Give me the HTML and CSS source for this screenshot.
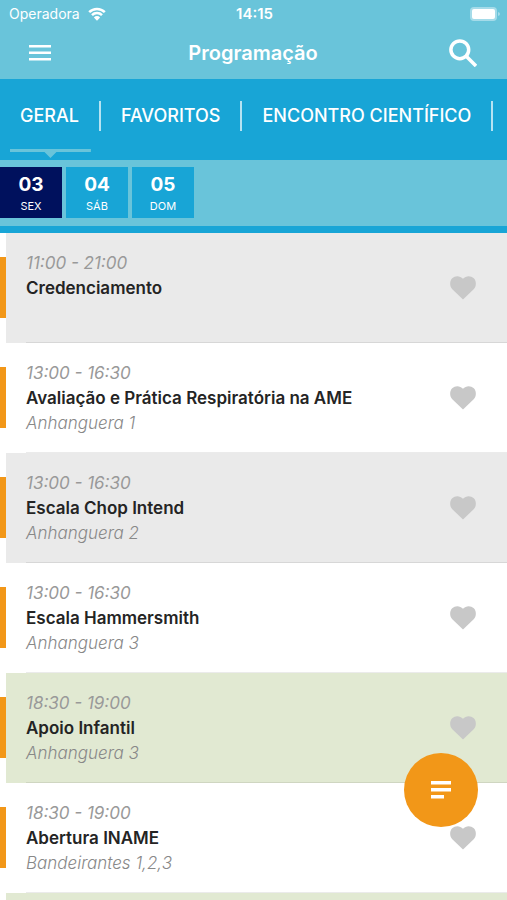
FILE: index.html
```html
<!DOCTYPE html>
<html lang="pt-BR">
<head>
  <meta charset="UTF-8" />
  <title>Programação</title>
  <meta name="viewport" content="width=device-width, initial-scale=1.0" />
  <link rel="stylesheet" href="styles.css">
</head>
<body>
  <svg class="sprite" aria-hidden="true">
    <symbol id="heart" viewBox="0 0 26 24">
      <path d="M13 23.5 2.3 13.2C-.6 10.2-.5 5 2.2 2.3 5.200-.6 10-.5 13 2.800 16-.5 20.800-.6 23.800 2.300c2.700 2.700 2.800 7.900-.1 10.900z" />
    </symbol>
  </svg>

  <header>
    <div class="status-bar">
      <span class="carrier">Operadora
        <svg class="wifi" viewBox="0 0 18 14">
          <path d="M1.200 5.200a11 11 0 0 1 15.600 0M4 8.200a7 7 0 0 1 10 0" />
          <path class="dot" d="M5.900 10.400a4.400 4.400 0 0 1 6.200 0L9 13.700z" />
        </svg>
      </span>
      <span class="clock">14:15</span>
      <svg class="battery" viewBox="0 0 30 14">
        <rect class="case" width="27" height="14" rx="4" />
        <rect x="2" y="2" width="23" height="10" rx="2" />
        <path class="tip" d="M28 5v4q2-.5 2-2t-2-2z" />
      </svg>
    </div>
    <div class="nav-bar">
      <button aria-label="Menu">
        <svg width="22" height="16" viewBox="0 0 22 16"><path d="M0 0h22v2.500H0zM0 6.500h22V9H0zM0 13h22v2.500H0z" /></svg>
      </button>
      <h1>Programação</h1>
      <button aria-label="Buscar">
        <svg class="search" width="28" height="28" viewBox="0 0 28 28">
          <circle cx="10.800" cy="10.800" r="8.900" />
          <path d="m17 17 10 10" />
        </svg>
      </button>
    </div>
  </header>

  <nav class="tabs">
    <a href="#geral" class="active">GERAL</a>
    <a href="#favoritos">FAVORITOS</a>
    <a href="#encontro">ENCONTRO CIENTÍFICO</a>
  </nav>

  <div class="days">
    <button class="active"><b>03</b>SEX</button>
    <button><b>04</b>SÁB</button>
    <button><b>05</b>DOM</button>
  </div>

  <main>
    <article class="gray">
      <div class="info">
        <time>11:00 - 21:00</time>
        <h2>Credenciamento</h2>
      </div>
      <button class="fav" aria-label="Favoritar"><svg><use href="#heart" /></svg></button>
    </article>
    <article>
      <div class="info">
        <time>13:00 - 16:30</time>
        <h2>Avaliação e Prática Respiratória na AME</h2>
        <p>Anhanguera 1</p>
      </div>
      <button class="fav" aria-label="Favoritar"><svg><use href="#heart" /></svg></button>
    </article>
    <article class="gray">
      <div class="info">
        <time>13:00 - 16:30</time>
        <h2>Escala Chop Intend</h2>
        <p>Anhanguera 2</p>
      </div>
      <button class="fav" aria-label="Favoritar"><svg><use href="#heart" /></svg></button>
    </article>
    <article>
      <div class="info">
        <time>13:00 - 16:30</time>
        <h2>Escala Hammersmith</h2>
        <p>Anhanguera 3</p>
      </div>
      <button class="fav" aria-label="Favoritar"><svg><use href="#heart" /></svg></button>
    </article>
    <article class="green">
      <div class="info">
        <time>18:30 - 19:00</time>
        <h2>Apoio Infantil</h2>
        <p>Anhanguera 3</p>
      </div>
      <button class="fav" aria-label="Favoritar"><svg><use href="#heart" /></svg></button>
    </article>
    <article>
      <div class="info">
        <time>18:30 - 19:00</time>
        <h2>Abertura INAME</h2>
        <p>Bandeirantes 1,2,3</p>
      </div>
      <button class="fav" aria-label="Favoritar"><svg><use href="#heart" /></svg></button>
    </article>
    <article class="green"></article>
  </main>

  <button class="fab" aria-label="Filtrar">
    <svg width="20" height="18" viewBox="0 0 20 18"><path d="M0 0h20v3.500H0zM0 7h20v3.500H0zM0 14h13v3.500H0z" /></svg>
  </button>
</body>
</html>
```
FILE: styles.css
```css
:root {
  --light-blue: #69c4da;
  --blue: #18a5d6;
  --navy: #00115d;
  --orange: #f29718;
}
* {
  box-sizing: border-box;
}
body {
  margin: 0;
  height: 100vh;
  display: flex;
  flex-direction: column;
  overflow: hidden;
  font-family: Inter, "Liberation Sans", sans-serif;
  background: #fff;
}
button {
  border: none;
  padding: 0;
  background: none;
  font-family: inherit;
  color: #fff;
  cursor: pointer;
}
svg {
  display: block;
  fill: currentColor;
}
h1, h2, p {
  margin: 0;
}
.sprite {
  position: absolute;
  width: 0;
  height: 0;
}
header {
  flex: none;
  background: var(--light-blue);
  color: #fff;
}
.status-bar {
  display: grid;
  grid-template-columns: 1fr auto 1fr;
  align-items: center;
  height: 27px;
  padding: 0 7px 0 9px;
  font-size: 15px;
}
.carrier {
  display: flex;
  align-items: center;
  gap: 8px;
  font-size: 14px;
}
.wifi {
  width: 18px;
  height: 14px;
  fill: none;
  stroke: #fff;
  stroke-width: 2.5;
}
.wifi .dot {
  fill: #fff;
  stroke: none;
}
.clock {
  font-weight: 600;
}
.battery {
  width: 30px;
  height: 14px;
  justify-self: end;
}
.battery .case,
.battery .tip {
  opacity: 0.4;
}
.nav-bar {
  display: grid;
  grid-template-columns: 1fr auto 1fr;
  align-items: center;
  height: 52px;
  padding: 0 30px 0 29px;
}
.nav-bar h1 {
  font-size: 20px;
  font-weight: 600;
}
.nav-bar button:last-child {
  justify-self: end;
}
.nav-bar button:first-child {
  justify-self: start;
}
.search {
  fill: none;
  stroke: #fff;
  stroke-width: 3.5;
}
.tabs {
  flex: none;
  display: flex;
  align-items: flex-start;
  height: 81px;
  background: var(--blue);
  overflow: hidden;
}
.tabs a {
  position: relative;
  flex: none;
  height: 80px;
  padding: 22px 22px 0 20px;
  line-height: 30px;
  font-size: 18px;
  font-weight: 500;
  color: #fff;
  text-decoration: none;
}
.tabs a::after {
  content: "";
  position: absolute;
  top: 22px;
  right: 0;
  width: 2px;
  height: 30px;
  background: #b5e3f2;
}
.tabs .active::before {
  content: "";
  position: absolute;
  left: 10px;
  right: 10px;
  bottom: 1px;
  height: 9px;
  background: var(--light-blue);
  clip-path: polygon(0 0, 100% 0, 100% 3px, calc(50% + 6px) 3px, 50% 100%, calc(50% - 6px) 3px, 0 3px);
}
.days {
  flex: none;
  display: flex;
  gap: 4px;
  padding: 7px 0 8px;
  background: var(--light-blue);
  border-bottom: 7px solid var(--blue);
}
.days button {
  width: 62px;
  height: 51px;
  background: var(--blue);
  font-size: 11px;
}
.days b {
  display: block;
  margin-bottom: 2px;
  font-size: 19px;
  line-height: 24px;
  font-weight: 700;
}
.days .active {
  background: var(--navy);
}
main {
  flex: 1;
  min-height: 0;
  overflow-y: auto;
  scrollbar-width: none;
}
article {
  position: relative;
  display: flex;
  justify-content: space-between;
  align-items: center;
  height: 110px;
  margin-left: 6px;
  padding: 0 31px 0 20px;
}
article::before {
  content: "";
  position: absolute;
  left: -6px;
  top: 24px;
  width: 6px;
  height: 61px;
  background: var(--orange);
}
article::after {
  content: "";
  position: absolute;
  left: 20px;
  right: 0;
  bottom: 0;
  height: 1px;
  background: rgba(0, 0, 0, 0.08);
}
.gray {
  background: #eaeaea;
}
.green {
  background: #e1e9d2;
}
.info {
  height: 75px;
  font-size: 17px;
  line-height: 25px;
  color: #999;
}
.info time {
  display: block;
  font-style: italic;
}
.info h2 {
  font-size: 17px;
  font-weight: 600;
  color: #242424;
}
.info p {
  font-style: italic;
  font-weight: 300;
  color: #888;
}
.fav {
  color: #c8c8c8;
}
.fav svg {
  width: 26px;
  height: 24px;
}
.fab {
  position: fixed;
  right: 29px;
  bottom: 73px;
  display: flex;
  justify-content: center;
  align-items: center;
  width: 74px;
  height: 74px;
  border-radius: 50%;
  background: var(--orange);
}
```
